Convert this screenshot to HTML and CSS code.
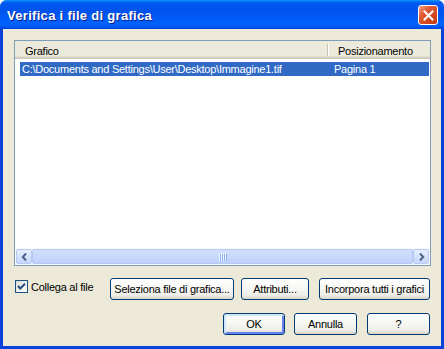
FILE: index.html
```html
<!DOCTYPE html>
<html lang="it">
<head>
    <meta charset="UTF-8">
    <meta name="viewport" content="width=device-width, initial-scale=1.0">
    <title>Verifica i file di grafica</title>
    <link rel="stylesheet" href="styles.css">
</head>
<body>
    <div class="window">
        <div class="titlebar">
            <span class="title">Verifica i file di grafica</span>
            <button class="close" aria-label="Chiudi">
                <svg width="11" height="11" viewBox="0 0 11 11">
                    <path d="M1.5 1.5 L9.5 9.5 M9.5 1.5 L1.5 9.5" stroke="#fff" stroke-width="2" stroke-linecap="square"/>
                </svg>
            </button>
        </div>

        <div class="client">
            <div class="listview">
                <div class="lv-header">
                    <div class="col col-file">Grafico</div>
                    <span class="col-sep"></span>
                    <div class="col col-pos">Posizionamento</div>
                </div>
                <div class="lv-body">
                    <div class="row selected">
                        <span class="cell cell-file">C:\Documents and Settings\User\Desktop\Immagine1.tif</span>
                        <span class="cell cell-pos">Pagina 1</span>
                    </div>
                </div>
                <div class="hscroll">
                    <div class="sb-btn">
                        <svg width="7" height="8" viewBox="0 0 7 8">
                            <path d="M5 0.5 L1.8 4 L5 7.5" fill="none" stroke="#4d6185" stroke-width="2"/>
                        </svg>
                    </div>
                    <div class="sb-thumb">
                        <svg width="8" height="8" viewBox="0 0 8 8">
                            <path d="M0.5 0 V8 M2.5 0 V8 M4.5 0 V8 M6.5 0 V8" stroke="#eef4fe" stroke-width="1"/>
                            <path d="M1.5 1 V8 M3.5 1 V8 M5.5 1 V8 M7.5 1 V8" stroke="#8cb0f8" stroke-width="1"/>
                        </svg>
                    </div>
                    <div class="sb-btn">
                        <svg width="7" height="8" viewBox="0 0 7 8">
                            <path d="M2 0.5 L5.2 4 L2 7.5" fill="none" stroke="#4d6185" stroke-width="2"/>
                        </svg>
                    </div>
                </div>
            </div>

            <div class="actions">
                <label class="check">
                    <span class="box">
                        <svg width="11" height="11" viewBox="0 0 11 11">
                            <path d="M2 5 L4.3 7.5 L9 2.8" fill="none" stroke="#274d7c" stroke-width="2"/>
                        </svg>
                    </span>
                    Collega al file
                </label>
                <button class="btn btn-select">Seleziona file di grafica...</button>
                <button class="btn btn-attr">Attributi...</button>
                <button class="btn btn-embed">Incorpora tutti i grafici</button>
            </div>

            <div class="dialog-buttons">
                <button class="btn btn-ok default">OK</button>
                <button class="btn btn-cancel">Annulla</button>
                <button class="btn btn-help">?</button>
            </div>
        </div>
    </div>
</body>
</html>
```

FILE: styles.css
```css
body {
    margin: 0;
    background: #ffffff;
    font-family: 'Liberation Sans', Arial, sans-serif;
    font-size: 11px;
    letter-spacing: -0.25px;
    color: #000;
}

.window {
    width: 444px;
    height: 349px;
    display: flex;
    flex-direction: column;
    background: #0842db;
    border-radius: 7px 7px 0 0;
    overflow: hidden;
}

.titlebar {
    height: 29px;
    flex: none;
    display: flex;
    align-items: center;
    padding: 0 6px 0 7px;
    box-sizing: border-box;
    background: linear-gradient(#0a97ff 0%, #0058ee 10%, #0053ee 40%, #0062fc 82%, #005bf6 90%, #0042d9 100%);
}

.title {
    flex: 1;
    padding-top: 2px;
    color: #fff;
    font-weight: bold;
    font-size: 13px;
    letter-spacing: 0.3px;
    text-shadow: 1px 1px 0 #0c1f8c;
}

.close {
    width: 20px;
    height: 20px;
    margin-top: 1px;
    padding: 0;
    border: 1px solid #fff;
    border-radius: 3px;
    background: linear-gradient(135deg, #f0a083 0%, #e05a33 35%, #d2451c 70%, #c13a12 100%);
    display: flex;
    align-items: center;
    justify-content: center;
}

.client {
    flex: 1;
    margin: 0 3px 3px;
    padding: 11px 10px 11px 11px;
    background: #ece9d8;
    display: flex;
    flex-direction: column;
}

/* list */

.listview {
    height: 226px;
    flex: none;
    box-sizing: border-box;
    border: 1px solid #7f9db9;
    background: #fff;
    display: flex;
    flex-direction: column;
}

.lv-header {
    height: 18px;
    flex: none;
    display: flex;
    align-items: center;
    background: #ebeadb;
    box-shadow: inset 0 -1px #cbc7b8, inset 0 -2px #d6d2c2, inset 0 -3px #e2decd;
}

.col {
    padding-top: 1px;
}

.col-file {
    width: 312px;
    padding-left: 10px;
    box-sizing: border-box;
}

.col-sep {
    width: 1px;
    height: 12px;
    margin-top: -1px;
    background: #c7c5b2;
    box-shadow: 1px 0 #fff;
}

.col-pos {
    padding-left: 10px;
}

.lv-body {
    flex: 1;
    padding: 3px 1px 0 5px;
}

.row {
    display: flex;
    height: 14px;
    line-height: 14px;
}

.row.selected {
    background: #316ac5;
    color: #fff;
}

.cell {
    padding-left: 2px;
    box-sizing: border-box;
    white-space: nowrap;
}

.cell-file {
    width: 312px;
}

/* scrollbar */

.hscroll {
    height: 17px;
    flex: none;
    box-sizing: border-box;
    padding: 1px;
    display: flex;
    background: #f9f9f6;
}

.sb-btn {
    width: 16px;
    box-sizing: border-box;
    border: 1px solid #b6c9f5;
    border-radius: 2px;
    background: linear-gradient(#e6eefe, #c6d6fb);
    display: flex;
    align-items: center;
    justify-content: center;
}

.sb-thumb {
    flex: 1;
    box-sizing: border-box;
    border: 1px solid #b6c9f5;
    border-radius: 2px;
    background: linear-gradient(#d2e0fd, #bed1fb);
    display: flex;
    align-items: center;
    justify-content: center;
}

/* bottom rows */

.actions {
    margin-top: 12px;
    height: 22px;
    display: flex;
    padding-right: 1px;
}

.check {
    width: 96px;
    display: flex;
    align-items: flex-start;
    padding-top: 3px;
    box-sizing: border-box;
    white-space: nowrap;
}

.box {
    width: 13px;
    height: 13px;
    margin-left: 1px;
    margin-right: 3px;
    margin-top: -1px;
    box-sizing: border-box;
    border: 1px solid #1c5180;
    background: linear-gradient(135deg, #dcdcd7, #ffffff);
    display: flex;
    align-items: center;
    justify-content: center;
}

.btn {
    height: 22px;
    padding: 0;
    box-sizing: border-box;
    border: 1px solid #003c74;
    border-radius: 3px;
    background: linear-gradient(#ffffff 0%, #f8f8f5 40%, #efeee8 80%, #d8d3c8 100%);
    font-family: 'Liberation Sans', Arial, sans-serif;
    font-size: 11px;
    letter-spacing: -0.25px;
    color: #000;
    text-align: center;
    white-space: nowrap;
}

.btn-select {
    width: 124px;
}

.btn-attr {
    width: 68px;
    margin-left: 7px;
}

.btn-embed {
    width: 111px;
    margin-left: 10px;
}

.dialog-buttons {
    margin-top: 13px;
    display: flex;
    justify-content: flex-end;
    padding-right: 1px;
}

.btn-ok {
    width: 62px;
}

.btn-cancel {
    width: 63px;
    margin-left: 9px;
}

.btn-help {
    width: 63px;
    margin-left: 10px;
}

.btn.default {
    box-shadow: inset 1px 1px 0 1px #cee7ff, inset -1px -1px 0 1px #6982ee;
}
```
